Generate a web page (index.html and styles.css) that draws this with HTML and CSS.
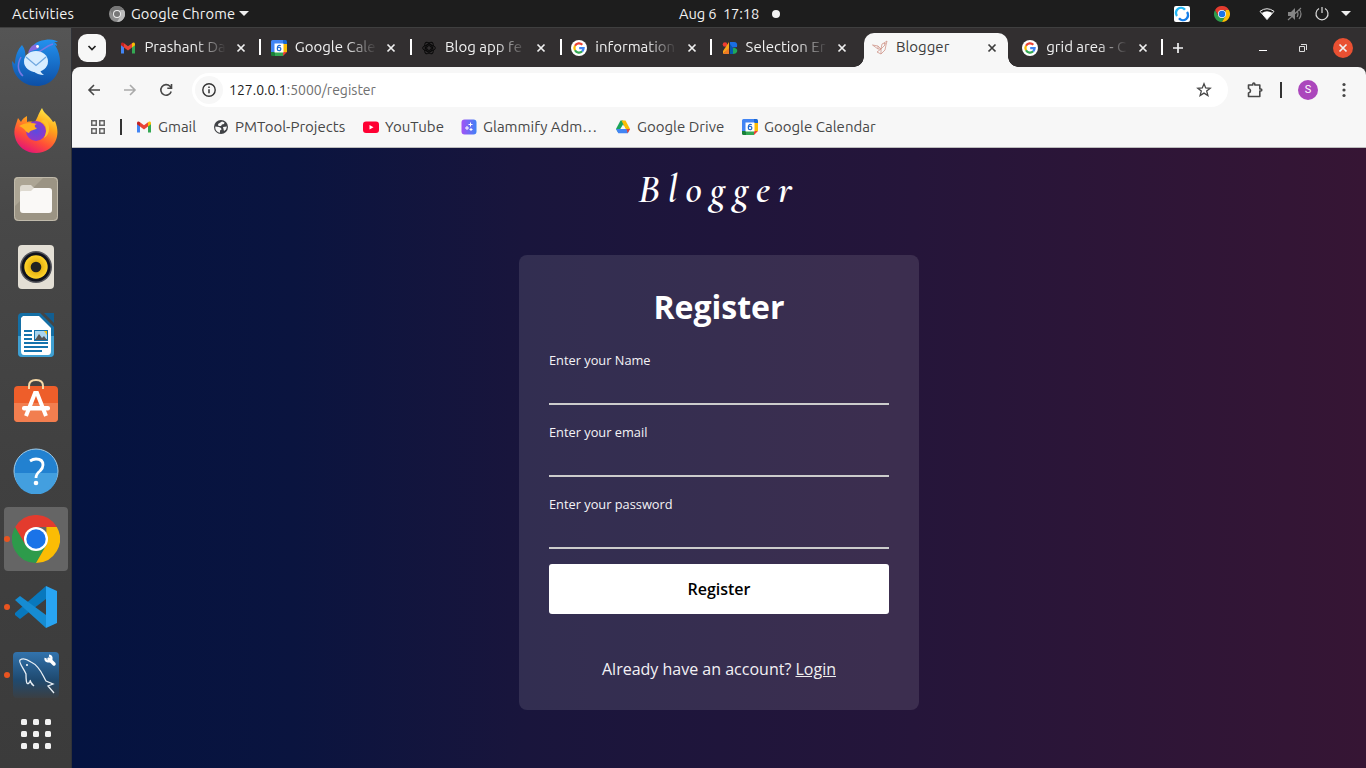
FILE: index.html
```html
<!DOCTYPE html>
<html lang="en">
<head>
<meta charset="utf-8">
<title>Blogger</title>
<link rel="stylesheet" href="styles.css">
</head>
<body>
<svg class="defs" width="0" height="0" aria-hidden="true">
  <defs>
    <linearGradient id="blue" x1="0" y1="0" x2="0" y2="1"><stop offset="0" stop-color="#2391ee"/><stop offset="1" stop-color="#0d4fa6"/></linearGradient>
    <linearGradient id="fire" x1=".8" y1="0" x2=".3" y2="1"><stop offset="0" stop-color="#fff44f"/><stop offset=".35" stop-color="#ffa71a"/><stop offset=".7" stop-color="#ff4d38"/><stop offset="1" stop-color="#e2127a"/></linearGradient>
    <radialGradient id="violet"><stop offset="0" stop-color="#5a4be0"/><stop offset="1" stop-color="#9138c8"/></radialGradient>
    <radialGradient id="cone"><stop offset="0" stop-color="#d49b00"/><stop offset="1" stop-color="#ffd42b"/></radialGradient>
    <linearGradient id="mysql" x1="0" y1="0" x2="0" y2="1"><stop offset="0" stop-color="#3273ad"/><stop offset=".6" stop-color="#1f4a70"/><stop offset="1" stop-color="#3b3f43"/></linearGradient>
    <linearGradient id="glam"><stop offset="0" stop-color="#a252f5"/><stop offset="1" stop-color="#3f82f6"/></linearGradient>
  </defs>
  <symbol id="gmail" viewBox="0 0 16 16"><path fill="#4285f4" d="M1 4v9.5h3V7z"/><path fill="#34a853" d="M12 7v6.5h3V4z"/><path fill="#ea4335" d="M4 3.2 8 6.3l4-3.1v4.2l-4 3-4-3z"/><path fill="#c5221f" d="M1 4.2C1 2.4 2.700 2 4 3.200v4.200L1 5.200z"/><path fill="#fbbc04" d="M15 4.200C15 2.400 13.300 2 12 3.200v4.200l3-2.200z"/></symbol>
  <symbol id="calendar" viewBox="0 0 16 16"><path fill="#4285f4" d="M1.500 0H12v4H4v8H0V1.500Q0 0 1.500 0z"/><path fill="#1967d2" d="M12 0h2.500Q16 0 16 1.500V4h-4z"/><path fill="#fbbc04" d="M12 4h4v8h-4z"/><path fill="#34a853" d="M4 12h8v4H4z"/><path fill="#188038" d="M0 12h4v4H1.500Q0 16 0 14.500z"/><path fill="#ea4335" d="M12 12h4l-4 4z"/><path fill="#fff" d="M3.500 3.500h9v9h-9z"/><path d="M9.800 5.700C7.200 4.600 6.300 6.500 6.300 8.600M9.800 9A1.750 1.750 0 1 1 6.300 9 1.750 1.750 0 0 1 9.800 9z" fill="none" stroke="#1a66d0" stroke-width="1.200"/></symbol>
  <symbol id="google" viewBox="0 0 16 16"><circle cx="8" cy="8" r="8" fill="#fff"/><g fill="none" stroke-width="2.300"><path stroke="#ea4335" d="M4 5.700A4.600 4.600 0 0 1 11.300 4.700"/><path stroke="#fbbc04" d="M4 5.700a4.700 4.700 0 0 0 0 4.600"/><path stroke="#34a853" d="M4 10.300a4.600 4.600 0 0 0 7.200 1"/><path stroke="#4285f4" d="M11.200 11.300A4.500 4.500 0 0 0 12.600 8.100H8.200"/></g></symbol>
  <symbol id="chrome" viewBox="0 0 48 48"><path fill="#2d9b4b" d="M3.200 12 13.600 30 24 34 34.400 30 24 48A24 24 0 0 1 3.200 12z"/><path fill="#fbbc04" d="M44.800 12A24 24 0 0 1 24 48l10.400-18V12z"/><path fill="#e33b2e" d="M3.200 12A24 24 0 0 1 44.800 12H24L13.600 30z"/><circle cx="24" cy="24" r="12" fill="#fff"/><circle cx="24" cy="24" r="9.700" fill="#1a73e8"/></symbol>
  <symbol id="close" viewBox="0 0 16 16"><path d="m4.500 4.500 7 7m0-7-7 7" fill="none" stroke="currentColor" stroke-width="1.700"/></symbol>
</svg>

<header class="topbar">
  <span class="activities">Activities</span>
  <span class="app-menu">
    <svg width="16" height="16" viewBox="0 0 16 16"><circle cx="8" cy="8" r="8" fill="#8d8d8d"/><path d="M1 4a8 8 0 0 1 14 0H8L4.500 10z" fill="#777"/><path d="M15 4a8 8 0 0 1-7 12l3.500-6V4z" fill="#bbb"/><circle cx="8" cy="8" r="4" fill="#eee"/><circle cx="8" cy="8" r="3" fill="#777"/></svg>
    <span>Google Chrome</span>
    <i class="caret"></i>
  </span>
  <span class="clock"><span class="time">Aug 6&nbsp; 17:18</span><i class="dot"></i></span>
  <span class="tray">
    <svg class="tray-sync" width="16" height="16" viewBox="0 0 16 16"><rect width="16" height="16" rx="2" fill="#fff"/><path d="M3 10A5 5 0 0 1 11 3.800" fill="none" stroke="#22b8f5" stroke-width="2.400"/><path d="M13 6A5 5 0 0 1 5 12.200" fill="none" stroke="#147de8" stroke-width="2.400"/></svg>
    <svg class="tray-chrome" width="16" height="16"><use href="#chrome"/></svg>
    <svg class="tray-wifi" width="16" height="14" viewBox="0 0 16 14"><path d="M1 4.300Q8-.800 15 4.300L8 12.600z" fill="none" stroke="#eee"/><path d="M2.800 6Q8 2.600 13.200 6L8 12.600z" fill="#fff"/></svg>
    <svg class="tray-mute" width="16" height="16" viewBox="0 0 16 16"><path fill="#858585" d="M1 6h3l4-4v12L4 10H1z"/><path d="M10 5q2 3 0 6m2-8q4 5 0 10M1 14 14 2" fill="none" stroke="#858585" stroke-width="1.200"/></svg>
    <svg class="tray-power" width="16" height="16" viewBox="0 0 16 16"><path d="M5 2.600a6 6 0 1 0 6 0M8 1v6" fill="none" stroke="#ddd" stroke-width="1.200"/></svg>
    <i class="caret"></i>
  </span>
</header>

<div class="desktop">
  <nav class="dock">
    <div class="slot"><svg width="48" height="48" viewBox="0 0 48 48"><path fill="url(#blue)" d="M10 6c3 4 4 8 3 13l4-4C18 7 24 2 33 1c6-1 11 0 13 2h-4c2 1 3 2 3 4l-2-1c4 6 5 12 5 18C47 38 37 47 25 47 10 47 0 36 0 22l3 3C3 17 6 10 10 6z"/><path d="M9 18c-5 9-2 16 2 19M17 13c3 2 6 2 9 0 5-2 8-6 15-8" fill="none" stroke="#7778e4" stroke-width="1.500"/><ellipse cx="24" cy="22.500" rx="12" ry="10.500" fill="#d8edff"/><path fill="#d8edff" d="M20 31c4 4 8 5 12 5-3-2-4-4-4-6z"/><path d="m14 18 10 8.500L34 18" fill="none" stroke="#6fa7df" stroke-width="1.300"/><path d="M16 14c1-4 3-7 6-8 2-1 5 0 5 2 0 3-6 2-11 6z" fill="#866ae0"/><circle cx="25.500" cy="7.500" r="1.400" fill="#fff"/></svg></div>
    <div class="slot"><svg width="46" height="48" viewBox="0 0 46 48"><path fill="url(#fire)" d="M29 1c2 6 8 8 11 14l2-1c5 12 2 22-6 28-13 9-31 2-34-12C0 22 3 18 5 11l3 4c1-3 4-5 6-6v6c4-1 7 0 7 1 3-3 4-9 8-15z"/><circle cx="23" cy="24" r="10" fill="url(#violet)"/><path fill="#ffb01f" d="M6 19c5-3 12-4 18-2-3 0-3 4 0 4-3 3-6 1-8 5-4-1-3-4-10-7z"/><path fill="#ffc32b" d="M28 14c7 4 6 11 3 17 7-4 6-14 2-19z"/></svg></div>
    <div class="slot"><svg width="44" height="44" viewBox="0 0 44 44"><rect width="44" height="44" rx="4" fill="#9b9484"/><path d="M0 30 30 0H4Q0 0 0 4z" fill="#aca594"/><rect x=".5" y=".5" width="43" height="43" rx="4" fill="none" stroke="#c0baab"/><path fill="#dedad0" d="M6 11q0-3 3-3h8l4 4v5H6z"/><path fill="#faf9f7" d="M6 15q0-1 2-1h9l3-3h15q3 0 3 3v19q0 3-3 3H9q-3 0-3-3z"/></svg></div>
    <div class="slot"><svg width="36" height="44" viewBox="0 0 36 44"><rect width="36" height="44" rx="4" fill="#e3dfd5"/><circle cx="18" cy="22" r="16" fill="#55565d"/><circle cx="18" cy="22" r="14.500" fill="#10131d"/><circle cx="18" cy="22" r="11.700" fill="url(#cone)"/><circle cx="18" cy="22" r="5.300" fill="#222"/></svg></div>
    <div class="slot writer"><svg width="38" height="46" viewBox="0 0 38 46"><path fill="#146fa5" d="M5 1h18l14 14v26q0 4-4 4H5q-4 0-4-4V5q0-4 4-4z"/><path fill="#3f9fd1" d="M1 24h36v17q0 4-4 4H5q-4 0-4-4z"/><path fill="#fff" d="M6 4h16l12 12v23q0 4-3 4H7q-3 0-3-4V6z"/><path fill="#125e91" d="M27 1h10v10z"/><path stroke="#1473ad" stroke-width="2" d="M7 19h8M7 23h8M7 27h8M7 31h24M7 35h24M7 39h18"/><path fill="#1473ad" d="M17 18h14v11H17z"/><path fill="#a9d4ee" d="M18 19h12v8H18z"/><path fill="#555" d="m18 28 4-6 3 4 2-2 3 4z"/><path fill="#f9c510" d="M27 19h3v4z"/></svg></div>
    <div class="slot store"><svg width="44" height="46" viewBox="0 0 44 46"><rect y="9" width="44" height="36" rx="4" fill="#ee5e2a"/><path fill="#f27e4f" d="M0 26h44v15q0 4-4 4H4q-4 0-4-4z"/><path d="M15 12V9q0-6 7-6t7 6v3" fill="none" stroke="#f6d8a6" stroke-width="2"/><path d="m12 39 9-23h2l9 23" fill="none" stroke="#fff" stroke-width="4"/><rect x="8" y="29" width="28" height="4.500" rx="2" fill="#fff"/></svg></div>
    <div class="slot"><svg width="46" height="46" viewBox="0 0 46 46"><circle cx="23" cy="23" r="22" fill="#2281d0" stroke="#a0cce9"/><path fill="#439fdf" d="M1.500 25h43A21.500 21.500 0 0 1 1.500 25z"/><path d="M17 13q3-2 6-2 7 0 7 6 0 3-3 6-4 3-4 7" fill="none" stroke="#fff" stroke-width="2.800"/><circle cx="23" cy="35" r="2.300" fill="#fff"/></svg></div>
    <div class="slot current running"><svg width="48" height="48"><use href="#chrome"/></svg></div>
    <div class="slot running"><svg width="44" height="44" viewBox="0 0 44 44"><path fill="#0878bd" d="M1 28 32 1v13L6 34l-5-4z"/><path fill="#168cd2" d="m1 15 5-4 26 19v13z"/><path fill="#28a4f2" d="m32 1 11 5v32l-11 5z"/></svg></div>
    <div class="slot running"><svg width="46" height="46" viewBox="0 0 46 46"><rect width="46" height="46" rx="4" fill="url(#mysql)"/><path d="M17 28c2 4 1 5 4 6M21 34c-3-3-4-6-5-3-3 3-3-5-3-9-2-5-8-12-6-14 4-3 8 0 11 2 9 4 12 14 15 19l7 3-5 2 6 7" fill="none" stroke="#e8eff5" stroke-width="1.300"/><circle cx="14" cy="13" r="1" fill="#fff"/><path d="m36 7 5 5" stroke="#fff" stroke-width="3.500" stroke-linecap="round"/><path d="M32.500 6a3 3 0 1 0 3.500-2.500" fill="none" stroke="#fff" stroke-width="2.200"/></svg></div>
    <div class="apps"><i></i><i></i><i></i><i></i><i></i><i></i><i></i><i></i><i></i></div>
  </nav>

  <section class="window">
    <div class="tabstrip">
      <span class="tab-search"><svg width="12" height="12" viewBox="0 0 12 12"><path d="m2.500 4 3.500 3.500L9.500 4" fill="none" stroke="#222" stroke-width="1.700"/></svg></span>
      <div class="tab sep"><svg class="fav"><use href="#gmail"/></svg><span class="title">Prashant Da</span><svg class="x"><use href="#close"/></svg></div>
      <div class="tab sep"><svg class="fav"><use href="#calendar"/></svg><span class="title">Google Cale</span><svg class="x"><use href="#close"/></svg></div>
      <div class="tab sep"><svg class="fav" viewBox="0 0 16 16"><g fill="none" stroke="#080808" stroke-width="1"><ellipse cx="8" cy="8" rx="6.300" ry="3.300"/><ellipse cx="8" cy="8" rx="6.300" ry="3.300" transform="rotate(60 8 8)"/><ellipse cx="8" cy="8" rx="6.300" ry="3.300" transform="rotate(120 8 8)"/><path d="m8 5.500 2.200 1.300v2.500L8 10.500 5.800 9.300V6.800z"/></g></svg><span class="title">Blog app fe</span><svg class="x"><use href="#close"/></svg></div>
      <div class="tab sep"><svg class="fav"><use href="#google"/></svg><span class="title">information</span><svg class="x"><use href="#close"/></svg></div>
      <div class="tab"><svg class="fav" viewBox="0 0 16 16"><circle cx="3" cy="4.500" r="2.300" fill="#ee3b31"/><path fill="#f9a31a" d="M7 2v7l-6 5V11z"/><path fill="#ef7a25" d="m1 14 6-6v6z"/><path fill="#1b6ee4" d="M8 2h4q4 0 3 5l-7 1z"/><path fill="#1fa85a" d="M11 8h2q3 1 2 4-1 2-4 2z"/><path fill="#0758ae" d="M8 4l3 4v6H8z"/></svg><span class="title">Selection Er</span><svg class="x"><use href="#close"/></svg></div>
      <div class="tab active"><svg class="fav" viewBox="0 0 16 16"><path d="m.5 5 5.500 1 3 3 1-5 2-1 3-2-1 4-1 5-4 4-4-2 4-3M.5 5l5.500 4 3 0 4-4-1-2 2 1M6 6v3M9 9v5" fill="none" stroke="#cf958a" stroke-width=".8"/></svg><span class="title">Blogger</span><svg class="x"><use href="#close"/></svg></div>
      <div class="tab sep"><svg class="fav"><use href="#google"/></svg><span class="title">grid area - C</span><svg class="x"><use href="#close"/></svg></div>
      <svg class="new-tab" width="12" height="12" viewBox="0 0 12 12"><path d="M6 1v10M1 6h10" stroke="#f2f2f2" stroke-width="1.700"/></svg>
      <div class="controls">
        <svg width="10" height="10"><path d="M1 7.500h8" stroke="#fff"/></svg>
        <svg width="10" height="10"><path d="M1.500 3.500h5v5h-5zM3 1.500h5.500V7" fill="none" stroke="#ddd"/></svg>
        <span class="win-close"><svg width="16" height="16"><use href="#close"/></svg></span>
      </div>
    </div>

    <div class="toolbar">
      <svg width="16" height="16" viewBox="0 0 16 16"><path d="M14 8H3m5-5L3 8l5 5" fill="none" stroke="#474747" stroke-width="1.600"/></svg>
      <svg width="16" height="16" viewBox="0 0 16 16"><path d="M2 8h11M8 3l5 5-5 5" fill="none" stroke="#aaa" stroke-width="1.600"/></svg>
      <svg width="16" height="16" viewBox="0 0 16 16"><path d="M13.200 9.500A5.300 5.300 0 1 1 12 4.300L13.500 6M13.500 2v4.300H9.300" fill="none" stroke="#474747" stroke-width="1.600"/></svg>
      <div class="omnibox">
        <span class="info"><svg width="16" height="16" viewBox="0 0 16 16"><circle cx="8" cy="8" r="6.200" fill="none" stroke="#333" stroke-width="1.400"/><path d="M8 7.200v4M8 4.600v1.500" stroke="#333" stroke-width="1.500"/></svg></span>
        <span class="url"><b>127.0.0.1</b>:5000/register</span>
        <svg class="star" width="16" height="16" viewBox="0 0 16 16"><path d="m8 1.800 1.700 4.200 4.500.300-3.500 2.800 1.200 4.400L8 11.100l-3.900 2.400 1.200-4.400L1.800 6.300 6.300 6z" fill="none" stroke="#474747" stroke-width="1.300"/></svg>
      </div>
      <svg class="ext" width="18" height="18" viewBox="0 0 18 18"><path d="M2.500 4h4.300V3q0-1 1-1t1 1v1h5v4h1q1 0 1 1t-1 1h-1v5.500H2.500V12q2-.500 2-2.200T2.500 7.500z" fill="none" stroke="#474747" stroke-width="1.600" stroke-linejoin="round"/></svg>
      <i class="rule"></i>
      <span class="avatar">S</span>
      <svg class="kebab" width="4" height="16"><circle cx="2" cy="2.500" r="1.600" fill="#474747"/><circle cx="2" cy="8" r="1.600" fill="#474747"/><circle cx="2" cy="13.500" r="1.600" fill="#474747"/></svg>
    </div>

    <div class="bookmarks">
      <svg class="grid-icon" width="14" height="14"><path d="M.750.750h4.500v4.500h-4.500zM8.750.750h4.500v4.500h-4.500zM.750 8.750h4.500v4.500h-4.500zM8.750 8.750h4.500v4.500h-4.500z" fill="none" stroke="#666" stroke-width="1.500"/></svg>
      <i class="rule"></i>
      <span class="bm gm"><svg><use href="#gmail"/></svg>Gmail</span>
      <span class="bm pm"><svg viewBox="0 0 16 16"><circle cx="8" cy="8" r="7" fill="#404246"/><path fill="#f7f7f7" d="M2.300 7.500 6 8l2 1 .5 1.500L7 11.500v2.200C4 13.300 2 11 2.300 7.500zM9 2.400l2.500 1L11 5l-2 .5-1 1.500H5.500l-.5-2zM10 8l4-.5-1 3-2 1.500z"/></svg>PMTool-Projects</span>
      <span class="bm yt"><svg viewBox="0 0 16 16"><rect y="2.500" width="16" height="11.500" rx="3" fill="#ff0033"/><path fill="#fff" d="m6.500 6 4 2.300-4 2.200z"/></svg>YouTube</span>
      <span class="bm gl"><svg viewBox="0 0 16 16"><rect x=".5" y=".5" width="15" height="15" rx="3" fill="url(#glam)"/><path d="M9.500 3.500v4M7.500 5.500h4M6 7v4M4 9h4M10 9v3M8.500 10.500h3" stroke="#fff" stroke-width="1"/></svg>Glammify Adm…</span>
      <span class="bm dr"><svg viewBox="0 0 16 16"><path fill="#1ca45c" d="M5.500 1.500H8L10 5l-6.500 9L1 10z"/><path fill="#fbbc04" d="M6.500 1.500h4L15 10h-4.500z"/><path fill="#4285f4" d="m1 10 2.300 4.200h9.400L15 10H5.500z"/><path fill="#ea4335" d="m12.700 14.200 2.300-4.200h-3.500z"/><path fill="#f7f7f7" d="m8 5.500 2.700 4.500H5.300z"/></svg>Google Drive</span>
      <span class="bm gc"><svg><use href="#calendar"/></svg>Google Calendar</span>
    </div>

    <main class="page">
      <h1 class="brand">Blogger</h1>
      <form class="card">
        <h2>Register</h2>
        <label class="field"><span>Enter your Name</span><input type="text"></label>
        <label class="field"><span>Enter your email</span><input type="text"></label>
        <label class="field"><span>Enter your password</span><input type="password"></label>
        <button type="button">Register</button>
        <p>Already have an account? <a href="#">Login</a></p>
      </form>
    </main>
  </section>
</div>
</body>
</html>
```
FILE: styles.css
```css
* { box-sizing: border-box; }
body {
  margin: 0;
  width: 1366px;
  height: 768px;
  overflow: hidden;
  display: flex;
  flex-direction: column;
  font: 15px/20px Ubuntu, "Noto Sans", "Open Sans", sans-serif;
}
svg { display: block; flex: none; }
.defs { position: absolute; }

.topbar {
  flex: none;
  height: 28px;
  display: grid;
  grid-template-columns: 109px 570px 495px 1fr;
  align-items: center;
  background: #1d1d1d;
  border-bottom: 1px solid #3f3f3f;
  color: #f2f2f2;
  font-size: 14.67px;
}
.activities { padding-left: 12px; letter-spacing: .2px; }
.app-menu, .clock, .tray { display: flex; align-items: center; }
.app-menu { gap: 6px; letter-spacing: .1px; }
.time { width: 93px; letter-spacing: -.1px; }
.caret { border: 5px solid transparent; border-top-color: #eee; border-bottom: 0; }
.app-menu .caret { margin-left: -2px; }
.dot { width: 8px; height: 8px; border-radius: 50%; background: #f2f2f2; }
.tray-chrome { margin-left: 24px; }
.tray-wifi { margin-left: 29px; }
.tray-mute { margin-left: 12px; }
.tray-power { margin-left: 11px; margin-right: 11px; }

.desktop { flex: 1; display: flex; min-height: 0; }
.dock {
  flex: none;
  width: 72px;
  padding-top: 1px;
  display: flex;
  flex-direction: column;
  align-items: center;
  background: linear-gradient(#555, #484848 25%, #404040 60%, #3b3b3b);
  border-right: 1px solid #303238;
}
.slot {
  position: relative;
  flex: none;
  width: 64px;
  height: 64px;
  margin: 2px 0;
  border-radius: 4px;
  display: grid;
  place-items: center;
}
.store { padding-bottom: 6px; }
.current { background: #656565; }
.running::before {
  content: "";
  position: absolute;
  left: 0;
  top: 29px;
  width: 6px;
  height: 6px;
  border-radius: 50%;
  background: #e95420;
}
.apps {
  display: grid;
  grid-template-columns: repeat(3, 6px);
  gap: 6px;
  padding-top: 10px;
}
.apps i { width: 6px; height: 6px; border-radius: 1.5px; background: #f1f1f1; }

.window { flex: 1; min-width: 0; display: flex; flex-direction: column; background: #322f30; }
.tabstrip { flex: none; height: 39px; display: flex; align-items: center; padding-left: 6px; color: #f0f0f0; }
.tab-search {
  width: 28px;
  height: 28px;
  margin-right: 6.4px;
  border-radius: 9px;
  background: #f7f7f7;
  display: grid;
  place-items: center;
}
.tab {
  position: relative;
  flex: none;
  width: 150.3px;
  height: 39px;
  padding-left: 8px;
  display: flex;
  align-items: center;
}
.fav { width: 16px; height: 16px; margin-right: 8px; }
.title {
  width: 82px;
  margin-right: 6.5px;
  padding-bottom: 1px;
  white-space: nowrap;
  mask-image: linear-gradient(90deg, #000 62%, transparent 100%);
}
.x { width: 16px; height: 16px; }
.sep::after { content: ""; position: absolute; left: 147px; top: 11px; width: 2px; height: 16px; background: #fff; }
.active { color: #3c3c3c; z-index: 0; }
.active .title { mask-image: none; }
.active::before {
  content: "";
  position: absolute;
  z-index: -1;
  left: 0;
  top: 5px;
  width: 144px;
  height: 34px;
  border-radius: 10px 10px 0 0;
  background: #f7f7f7;
}
.active::after {
  content: "";
  position: absolute;
  z-index: -1;
  left: -10px;
  bottom: 0;
  width: 164px;
  height: 10px;
  background:
    radial-gradient(circle at 0 0, transparent 9.5px, #f7f7f7 10px) left / 10px 10px no-repeat,
    radial-gradient(circle at 100% 0, transparent 9.5px, #f7f7f7 10px) right / 10px 10px no-repeat;
}
.new-tab { margin-left: 7.4px; }
.controls { margin-left: auto; display: flex; align-items: center; gap: 30px; padding-right: 13px; }
.win-close { width: 20px; height: 20px; margin-left: -5px; border-radius: 50%; background: #e95032; display: grid; place-items: center; }

.toolbar {
  flex: none;
  height: 45px;
  padding-left: 14px;
  display: flex;
  align-items: center;
  gap: 20px;
  background: #f7f7f7;
  border-radius: 8px 8px 0 0;
}
.omnibox {
  width: 1036px;
  height: 34px;
  margin-left: -2px;
  padding: 0 16px 0 3px;
  border-radius: 17px;
  background: #fff;
  display: flex;
  align-items: center;
}
.info { width: 28px; height: 28px; border-radius: 50%; background: #f7f7f7; display: grid; place-items: center; }
.url { margin-left: 6px; color: #707070; font-size: 14px; }
.url b { font-weight: 400; color: #1f1f1f; }
.star { margin-left: auto; }
.ext { margin-left: -2px; }
.rule { flex: none; width: 2px; height: 16px; background: #333; }
.toolbar .rule { margin-left: -4px; }
.avatar {
  width: 20px;
  height: 20px;
  margin-left: -4px;
  border-radius: 50%;
  background: #ab47bc;
  color: #fff;
  font: 11px/20px Roboto, sans-serif;
  text-align: center;
}
.kebab { margin-left: 4px; }

.bookmarks {
  flex: none;
  height: 36px;
  padding: 0 0 5px 19px;
  display: flex;
  align-items: center;
  background: #f7f7f7;
  border-bottom: 1px solid #bdbdbd;
  color: #474747;
}
.bookmarks .rule { margin: 0 14px 0 15px; }
.bm { flex: none; display: flex; align-items: center; gap: 6px; white-space: nowrap; }
.bm svg { width: 16px; height: 16px; }
.gm { width: 77px; }
.pm { width: 150px; }
.yt { width: 98px; }
.gl { width: 154px; }
.dr { width: 127px; }

.page {
  flex: 1;
  display: flex;
  flex-direction: column;
  align-items: center;
  background: linear-gradient(90deg, #041340 0%, #0a143f 17%, #19153c 35%, #25153a 65%, #361534 100%);
  color: #fff;
  font-family: "Open Sans", sans-serif;
}
.brand {
  margin: 16px 0 41px;
  font: italic 600 40px/50px "Cormorant Garamond", "Liberation Serif", serif;
  letter-spacing: 8px;
}
.card {
  width: 400px;
  height: 455px;
  padding: 30px;
  border-radius: 8px;
  background: rgba(255, 255, 255, .11);
  display: flex;
  flex-direction: column;
}
.card h2 { margin: 0 0 10px; font-size: 32px; line-height: 44px; text-align: center; }
.field { display: flex; flex-direction: column; height: 72px; padding-top: 12px; font-size: 12.8px; line-height: 18px; color: #f4f3f6; }
.field input { height: 36px; padding: 0; background: none; border: 0; border-bottom: 2px solid #ccc; }
.card button {
  flex: none;
  height: 50px;
  margin-top: 9px;
  border: 0;
  border-radius: 3px;
  background: #fff;
  color: #000;
  font: 600 16px/22px "Open Sans", sans-serif;
}
.card p { margin: 44px 0 0; font-size: 16px; line-height: 22px; text-align: center; color: #f3f1f5; }
.card a { color: #efefef; }
```
